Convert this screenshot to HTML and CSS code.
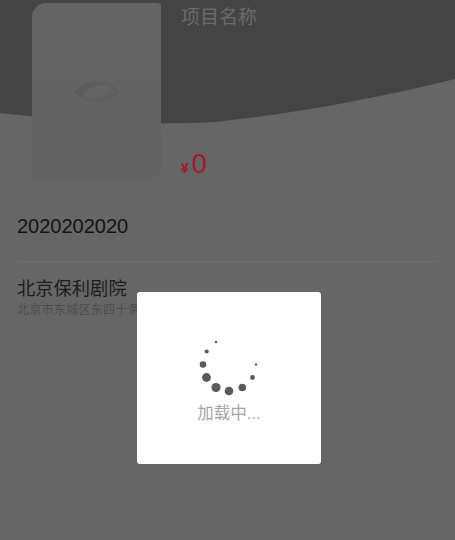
FILE: index.html
```html
<!DOCTYPE html>
<html lang="zh">
<head>
  <meta charset="UTF-8">
  <title>项目详情</title>
  <meta name="viewport" content="width=device-width, initial-scale=1">
  <link rel="stylesheet" href="styles.css">
</head>
<body>
  <!-- top part with the curved dark background -->
  <div class="hero">
    <svg class="hero-bg" width="455" height="130" viewBox="0 0 455 130">
      <path d="M0 0H455V79C370 100 290 114 215 122C170 125 90 123 0 113Z" fill="#444"/>
    </svg>
    <div class="poster">
      <svg width="46" height="22" viewBox="0 0 46 22">
        <path d="M0 11C8 3 15 0 23 0C31 0 38 3 46 11C38 18 31 21 23 21C15 21 8 18 0 11Z" fill="#5d5d5d"/>
        <ellipse cx="24" cy="11" rx="15" ry="6" transform="rotate(-14 24 11)" fill="#646464"/>
        <path d="M12 18C18 19 30 17 38 10L46 11C38 18 31 21 23 21C19 21 15 20 12 18Z" fill="#606060"/>
      </svg>
    </div>
    <div class="info">
      <div class="name">项目名称</div>
      <div class="price"><span class="yen">¥</span>0</div>
    </div>
  </div>

  <div class="date">2020202020</div>

  <div class="venue">
    <div class="venue-name">北京保利剧院</div>
    <div class="venue-addr">北京市东城区东四十条</div>
  </div>

  <!-- loading toast -->
  <div class="mask">
    <div class="toast">
      <svg class="spinner" width="64" height="64" viewBox="0 0 64 64">
        <circle cx="32" cy="59" r="4.3"/>
        <circle cx="19" cy="55.5" r="4.6"/>
        <circle cx="9.5" cy="45.5" r="4.4"/>
        <circle cx="6" cy="32.5" r="3.3"/>
        <circle cx="9.7" cy="19.5" r="2"/>
        <circle cx="19" cy="10" r="1.2"/>
        <circle cx="45.3" cy="55.5" r="3.8"/>
        <circle cx="55.5" cy="45.5" r="2.4"/>
        <circle cx="59" cy="32.5" r="1.2"/>
      </svg>
      <div class="toast-text">加载中...</div>
    </div>
  </div>
</body>
</html>
```

FILE: styles.css
```css
body {
  font-family: "Liberation Sans", "Noto Sans CJK SC", sans-serif;
  background: #666;
  margin: 0;
  padding: 0;
  height: 540px;
  overflow: hidden;
}
.hero {
  position: relative;
  display: flex;
  gap: 20px;
  padding: 3px 0 0 32px;
}
.hero-bg {
  position: absolute;
  top: 0;
  left: 0;
}
.poster {
  position: relative;
  width: 129px;
  height: 177px;
  border-radius: 14px 4px 14px 4px;
  background: linear-gradient(#646464, #626262);
  display: flex;
  align-items: center;
  justify-content: center;
}
.info {
  position: relative;
  display: flex;
  flex-direction: column;
  justify-content: space-between;
  width: 120px;
}
.name {
  font-size: 19px;
  line-height: 28px;
  margin-top: 1px;
  color: #6b6b6b;
}
.price {
  font-size: 27px;
  line-height: 30px;
  margin-bottom: -3px;
  color: #a01a30;
}
.yen {
  font-size: 14px;
  font-weight: bold;
  margin-right: 3px;
}
.date {
  margin: 34px 17px 0;
  padding-bottom: 23px;
  border-bottom: 1px solid #6e6e6e;
  font-size: 20px;
  line-height: 24px;
  color: #141414;
}
.venue {
  margin: 15px 17px 0;
}
.venue-name {
  font-size: 18.3px;
  line-height: 24px;
  color: #1c1c1c;
}
.venue-addr {
  font-size: 12px;
  line-height: 16px;
  margin-top: 1px;
  letter-spacing: 0.3px;
  color: #4e4e4e;
}
.mask {
  position: fixed;
  top: 0;
  left: 0;
  width: 455px;
  height: 540px;
}
.toast {
  position: absolute;
  left: 137px;
  top: 292px;
  width: 184px;
  height: 172px;
  border-radius: 3px;
  background: #fff;
  display: flex;
  flex-direction: column;
  align-items: center;
  padding-top: 40px;
  box-sizing: border-box;
}
.spinner {
  display: block;
  fill: #5a5a5a;
}
.toast-text {
  margin-top: 6px;
  font-size: 16.5px;
  line-height: 22px;
  color: #a6a6a6;
}
```
